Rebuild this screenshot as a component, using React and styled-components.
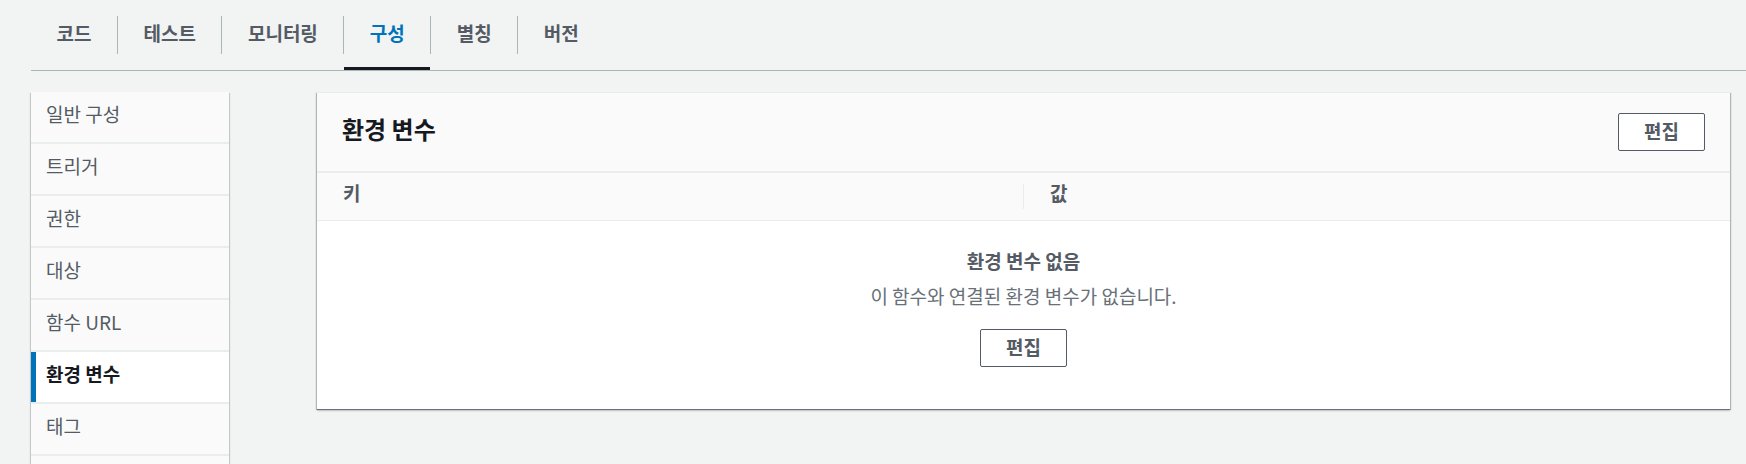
import React from "react";
import styled, { createGlobalStyle } from "styled-components";

const GlobalStyle = createGlobalStyle`
  html, body {
    margin: 0;
    padding: 0;
    overflow: hidden;
    background: #f2f3f3;
    font-family: "Noto Sans CJK KR", "Noto Sans", sans-serif;
    font-size: 19px;
    color: #16191f;
  }
`;

const tabs = ["코드", "테스트", "모니터링", "구성", "별칭", "버전"];
const navItems = ["일반 구성", "트리거", "권한", "대상", "함수 URL", "환경 변수", "태그"];

export default function App() {
  return (
    <Page>
      <GlobalStyle />
      <TabList>
        {tabs.map((t, i) => (
          <Tab key={t} $active={t === "구성"}>
            <TabLabel $first={i === 0}>{t}</TabLabel>
          </Tab>
        ))}
      </TabList>

      <Content>
        <SideNav>
          {navItems.map((n) => (
            <NavItem key={n} $active={n === "환경 변수"}>
              {n}
            </NavItem>
          ))}
          {/* next item starts right at the bottom edge */}
          <NavItem aria-hidden="true" />
        </SideNav>

        <Panel>
          <PanelHeader>
            <PanelTitle>환경 변수</PanelTitle>
            <Button>편집</Button>
          </PanelHeader>
          <ColumnRow>
            <ColumnCell>키</ColumnCell>
            <ColumnDivider />
            <ColumnCell>값</ColumnCell>
          </ColumnRow>
          <EmptyState>
            <EmptyTitle>환경 변수 없음</EmptyTitle>
            <EmptyText>이 함수와 연결된 환경 변수가 없습니다.</EmptyText>
            <Button $spaced>편집</Button>
          </EmptyState>
        </Panel>
      </Content>
    </Page>
  );
}

const Page = styled.div`
  padding-left: 31px;
`;

const TabList = styled.div`
  display: flex;
  border-bottom: 1px solid #aab7b8;
`;

const Tab = styled.div`
  position: relative;
  padding: 16px 0 16px;
  font-weight: 700;
  color: ${(p) => (p.$active ? "#0073bb" : "#545b64")};
  &::after {
    content: "";
    display: ${(p) => (p.$active ? "block" : "none")};
    position: absolute;
    left: 1px;
    right: 0;
    bottom: 0;
    height: 3px;
    background: #16191f;
  }
`;

const TabLabel = styled.div`
  display: flex;
  align-items: center;
  box-sizing: border-box;
  height: 38px;
  padding: 0 25.5px 4px;
  line-height: 24px;
  border-left: ${(p) => (p.$first ? "none" : "1px solid #aab7b8")};
`;

const Content = styled.div`
  display: grid;
  grid-template-columns: 198px 1fr;
  column-gap: 88px;
  align-items: start;
  margin-top: 21px;
  padding-right: 16px;
`;

const SideNav = styled.div`
  display: flex;
  flex-direction: column;
  gap: 2px;
  background: #eaeded;
  box-shadow: 0 1px 1px 0 rgba(0, 28, 36, 0.3),
    1px 1px 1px 0 rgba(0, 28, 36, 0.15), -1px 1px 1px 0 rgba(0, 28, 36, 0.15);
`;

const NavItem = styled.div`
  box-sizing: border-box;
  height: 50px;
  padding: 8px 15px 0;
  line-height: 27.5px;
  background: ${(p) => (p.$active ? "#ffffff" : "#fafafa")};
  color: ${(p) => (p.$active ? "#16191f" : "#545b64")};
  font-weight: ${(p) => (p.$active ? 700 : 400)};
  box-shadow: ${(p) => (p.$active ? "inset 5px 0 0 #0073bb" : "none")};
`;

const Panel = styled.section`
  background: #ffffff;
  border-top: 1px solid #eaeded;
  box-shadow: 0 1px 0 0 #687078, 0 2px 2px 0 rgba(0, 28, 36, 0.15),
    1px 1px 1px 0 rgba(0, 28, 36, 0.25), -1px 1px 1px 0 rgba(0, 28, 36, 0.25);
`;

const PanelHeader = styled.div`
  display: flex;
  align-items: center;
  justify-content: space-between;
  box-sizing: border-box;
  height: 80px;
  padding: 0 25px;
  background: #fafafa;
  border-bottom: 2px solid #eaeded;
`;

const PanelTitle = styled.h2`
  margin: 0 0 7px;
  font-size: 24px;
  line-height: 30px;
  font-weight: 700;
  color: #16191f;
`;

const Button = styled.button`
  box-sizing: border-box;
  height: 38px;
  padding: 0 25px 2px;
  margin-top: ${(p) => (p.$spaced ? "20px" : "0")};
  background: #ffffff;
  border: 1px solid #545b64;
  border-radius: 2px;
  font-family: inherit;
  font-size: 19px;
  font-weight: 700;
  color: #545b64;
  line-height: 24px;
`;

const ColumnRow = styled.div`
  display: flex;
  align-items: center;
  box-sizing: border-box;
  height: 48px;
  background: #fafafa;
  border-bottom: 1px solid #eaeded;
`;

const ColumnCell = styled.div`
  flex: 1;
  padding: 0 26px 7px;
  font-weight: 700;
  color: #545b64;
  line-height: 27.5px;
`;

const ColumnDivider = styled.div`
  width: 1px;
  height: 25px;
  margin-top: -1px;
  background: #eaeded;
`;

const EmptyState = styled.div`
  display: flex;
  flex-direction: column;
  align-items: center;
  padding: 26px 0 42px;
  text-align: center;
`;

const EmptyTitle = styled.div`
  font-weight: 700;
  color: #545b64;
  line-height: 27.5px;
`;

const EmptyText = styled.div`
  margin-top: 7px;
  color: #687078;
  line-height: 27.5px;
`;
